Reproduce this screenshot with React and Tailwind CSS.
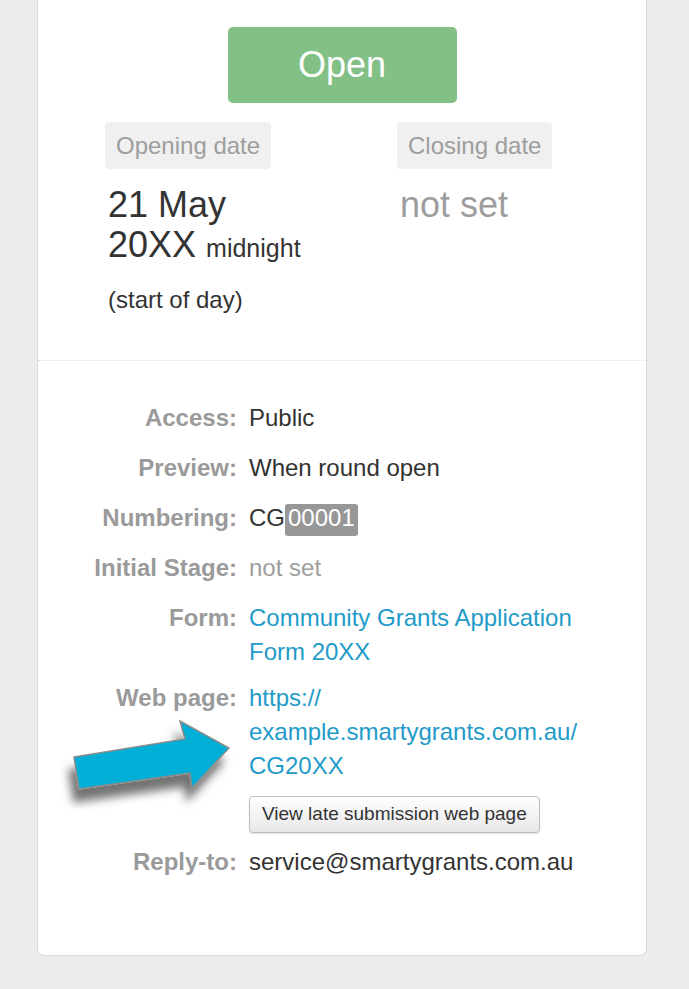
import React from "react";

const font = { fontFamily: '"Liberation Sans", Arial, sans-serif' };

function DateColumn({ label, children, width }) {
  return (
    <div className={width}>
      <span className="inline-block rounded-[4px] bg-[#f0f0f0] px-[11px] py-[10px] text-[24px] leading-[27px] text-[#9d9d9d]">
        {label}
      </span>
      <div className="mt-[16px] pl-[3px]">{children}</div>
    </div>
  );
}

function Row({ label, children, className = "" }) {
  return (
    <div className={`flex text-[24px] leading-[34px] ${className}`}>
      <div className="w-[199px] shrink-0 text-right font-bold text-[#9a9a9a]">{label}</div>
      <div className="ml-[12px] w-[340px] text-[#333]">{children}</div>
    </div>
  );
}

function Arrow() {
  // big blue callout arrow pointing at the web page link
  return (
    <svg className="absolute left-[50px] top-[700px]" width="200" height="130" viewBox="0 0 200 130">
      <defs>
        <filter id="arrowShadow" x="-30%" y="-30%" width="160%" height="180%">
          <feDropShadow dx="-5" dy="13" stdDeviation="5" floodColor="#000" floodOpacity="0.55" />
        </filter>
      </defs>
      <polygon
        points="24,57 135,39 130,21 179,48 142,88 140,73 29,89"
        fill="#00aed6"
        stroke="#8c8c8c"
        strokeWidth="1.5"
        strokeLinejoin="miter"
        filter="url(#arrowShadow)"
      />
    </svg>
  );
}

export default function App() {
  return (
    <div className="relative min-h-screen bg-[#ececec] pb-[32px]" style={font}>
      <div className="ml-[37px] w-[610px] rounded-b-[7px] border-x border-b border-[#d9d9d9] bg-white">
        <div className="pt-[27px] pb-[45px]">
          <div className="flex justify-center">
            <div className="flex h-[76px] w-[229px] items-center justify-center rounded-[5px] bg-[#82c086] text-[36px] text-white">
              Open
            </div>
          </div>

          <div className="mt-[19px] flex pl-[67px]">
            <DateColumn label="Opening date" width="w-[292px]">
              <div className="text-[36px] leading-[40px] text-[#333]">
                21 May
                <br />
                20XX <span className="text-[25px]">midnight</span>
              </div>
              <div className="mt-[17px] text-[24px] leading-[30px] text-[#333]">(start of day)</div>
            </DateColumn>
            <DateColumn label="Closing date" width="w-[200px]">
              <div className="text-[36px] leading-[40px] text-[#9d9d9d]">not set</div>
            </DateColumn>
          </div>
        </div>

        <div className="border-t border-dotted border-[#dcdcdc] pt-[40px] pb-[76px]">
          <Row label="Access:">Public</Row>
          <Row label="Preview:" className="mt-[16px]">When round open</Row>
          <Row label="Numbering:" className="mt-[16px]">
            CG<span className="rounded-[3px] bg-[#979797] px-[3px] pb-[5px] text-white">00001</span>
          </Row>
          <Row label="Initial Stage:" className="mt-[16px]">
            <span className="text-[#9d9d9d]">not set</span>
          </Row>
          <Row label="Form:" className="mt-[16px]">
            <span className="text-[#1f9bc9]">
              Community Grants Application
              <br />
              Form 20XX
            </span>
          </Row>
          <Row label="Web page:" className="mt-[12px]">
            <span className="text-[#1f9bc9]">
              https://
              <br />
              example.smartygrants.com.au/
              <br />
              CG20XX
            </span>
            <div className="mt-[12px]">
              <button className="h-[37px] rounded-[4px] border border-[#bdbdbd] bg-gradient-to-b from-white to-[#e8e8e8] px-[12px] text-[19px] text-[#333] shadow-[0_1px_1px_rgba(0,0,0,0.12)]">
                View late submission web page
              </button>
            </div>
          </Row>
          <Row label="Reply-to:" className="mt-[12px]">service@smartygrants.com.au</Row>
        </div>
      </div>
      <Arrow />
    </div>
  );
}
